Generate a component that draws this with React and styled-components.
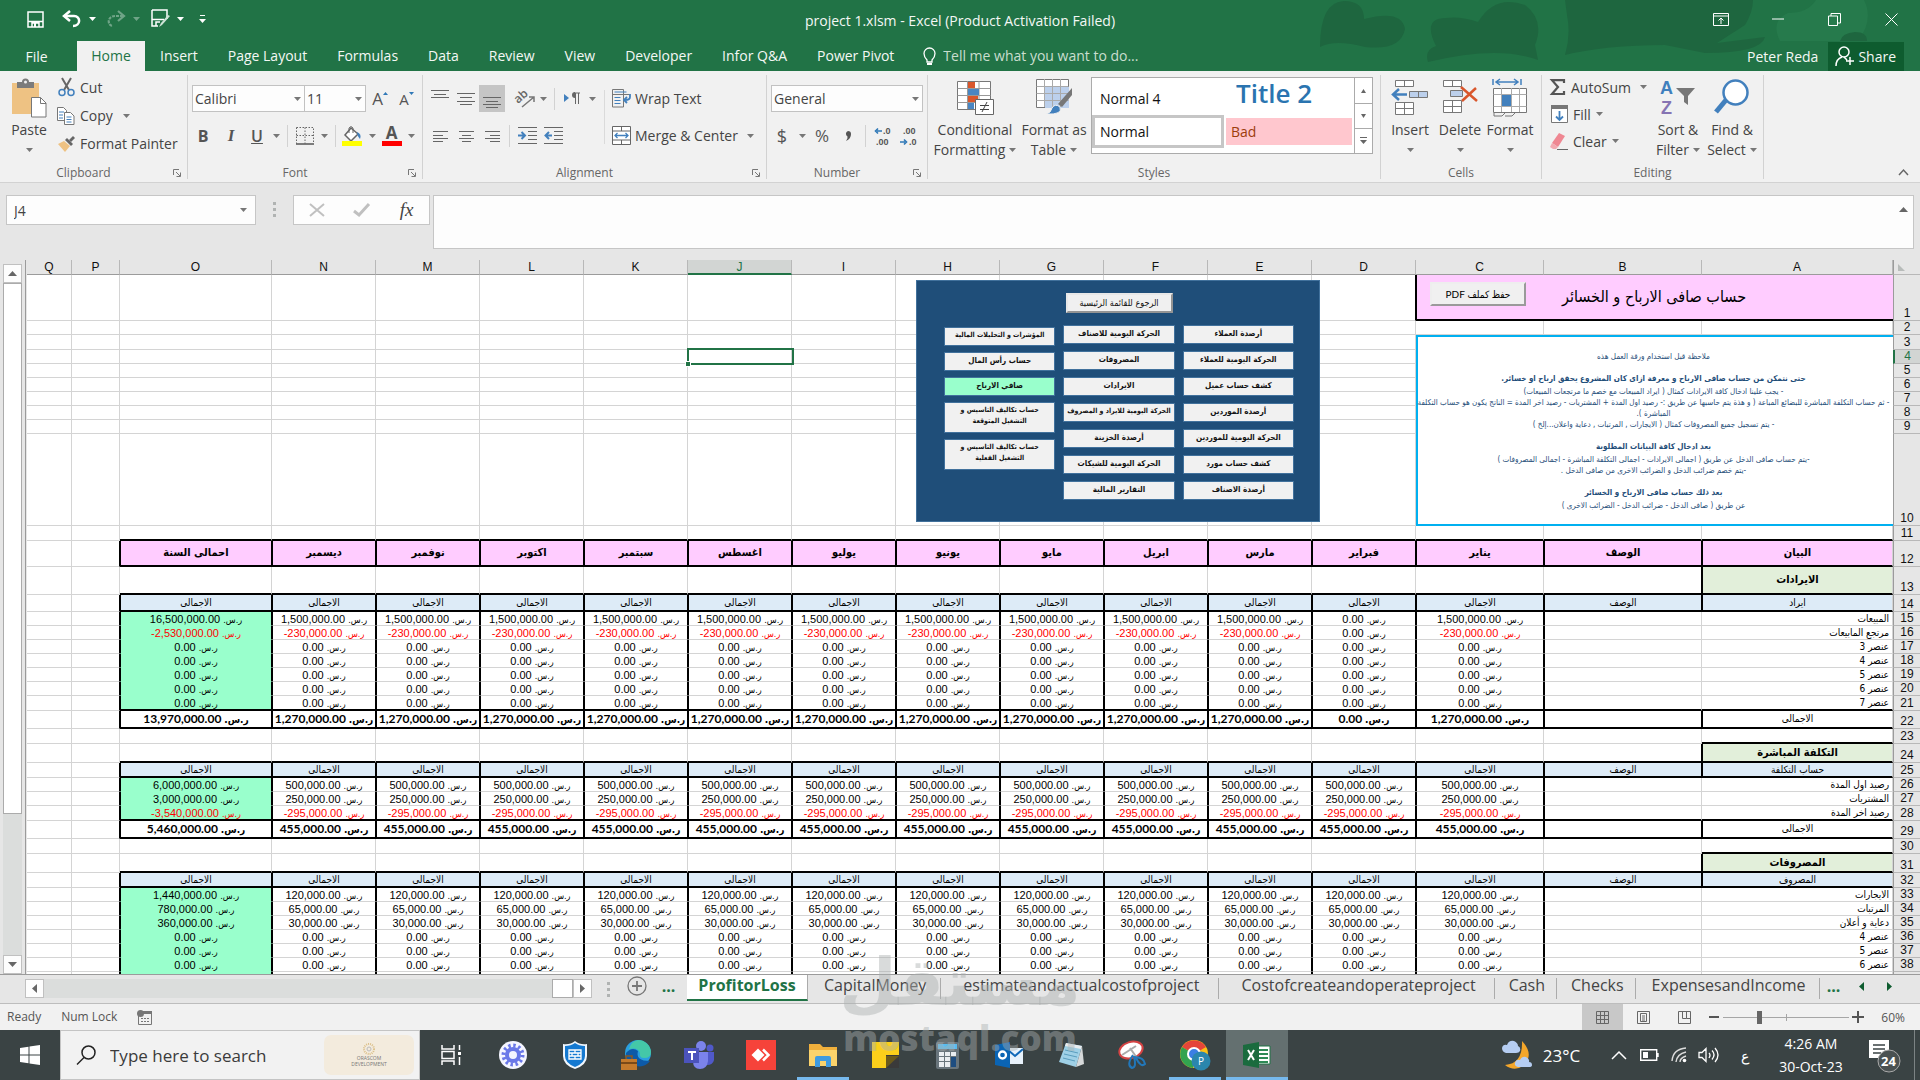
import React from "react";
import styled, { createGlobalStyle, css } from "styled-components";

const UI = '"Open Sans", "Noto Sans", sans-serif';
const CELL = '"Liberation Sans", "DejaVu Sans Condensed", "DejaVu Sans", sans-serif';
const ARABIC = '"DejaVu Sans Condensed", "DejaVu Sans", sans-serif';

const Global = createGlobalStyle`
  *, *::before, *::after { box-sizing: border-box; }
  body { margin: 0; background: #e6e6e6; font-family: ${UI}; }
  button, input, select, textarea { font: inherit; color: inherit; margin: 0; border-radius: 0; }
  button { background: none; border: 0; padding: 0; }
  svg { display: block; flex: none; overflow: visible; }
`;

const Shell = styled.div`
  position: relative;
  display: flex;
  flex-direction: column;
  height: 100vh;
  overflow: hidden;
  font-size: 14px;
  color: #444;
`;

/* ---------- Title bar and ribbon tabs ---------- */
const Header = styled.header`
  position: relative;
  flex: none;
  background: #217346;
  color: #f4f8f5;
`;
const Clouds = styled.svg`
  position: absolute;
  right: 0;
  top: 0;
`;
const TitleBar = styled.div`
  position: relative;
  height: 41px;
  display: grid;
  grid-template-columns: 1fr auto 1fr;
  align-items: center;
`;
const QuickAccess = styled.div`
  display: flex;
  align-items: center;
  padding: 0 0 3px 21px;
`;
const QuickButton = styled.button`
  width: 28px;
  height: 26px;
  display: flex;
  align-items: center;
  justify-content: center;
  opacity: ${(p) => (p.disabled ? 0.35 : 1)};
`;
const QuickSplit = styled.div`
  display: grid;
  grid-template-columns: 24px 16px;
  margin-left: ${(p) => p.$ml || 4}px;
  button { width: auto; }
`;
const WindowButtons = styled.div`
  display: flex;
  justify-content: flex-end;
  padding: 0 0 3px;
  button { width: 57px; height: 26px; display: flex; align-items: center; justify-content: center; }
`;
const TabRow = styled.nav`
  position: relative;
  display: flex;
  height: 30px;
  align-items: stretch;
`;
const Tab = styled.button`
  padding: 0 15px 1px;
  line-height: 28px;
  white-space: nowrap;
  ${(p) => p.$file && css`width: 77px; padding: 2px 4px 0 0;`}
  ${(p) => p.$active && css`background: #f1f1f1; color: #217346; width: 68px; padding: 0 0 1px;`}
`;
const TellMe = styled.label`
  display: flex;
  align-items: center;
  gap: 7px;
  padding-left: 14px;
  flex: 1;
  input { background: none; border: 0; padding: 0 0 2px; width: 240px; outline: 0; }
  input::placeholder { color: #c9decf; opacity: 1; }
`;
const Account = styled.div`
  display: flex;
  align-items: center;
  gap: 10px;
  padding-right: 16px;
`;
const Share = styled.button`
  display: flex;
  align-items: center;
  gap: 4px;
  height: 29px;
  padding: 0 8px 0 7px;
  background: #0e5c2f;
`;

/* ---------- Ribbon ---------- */
const Ribbon = styled.section`
  flex: none;
  display: flex;
  height: 112px;
  background: #f1f1f1;
  border-bottom: 1px solid #d2d2d2;
`;
const Group = styled.div`
  width: ${(p) => p.$w}px;
  display: flex;
  flex-direction: column;
  padding: 4px 0 3px;
`;
const GroupInner = styled.div`
  flex: 1;
  display: flex;
  flex-direction: column;
  border-right: 1px solid #d2d2d2;
`;
const GroupBody = styled.div`
  flex: 1;
  display: flex;
  padding-left: ${(p) => p.$pad || 0}px;
`;
const GroupFoot = styled.div`
  display: grid;
  grid-template-columns: 1fr ${(p) => (p.$launch ? "20px" : "0")};
  align-items: start;
  height: 16px;
  font-size: 12px;
  line-height: 20px;
  text-align: center;
  color: #666;
  button { height: 20px; display: flex; align-items: center; justify-content: center; }
`;
const Column = styled.div`
  display: flex;
  flex-direction: column;
  width: ${(p) => (p.$w ? p.$w + "px" : "auto")};
`;
const Stack = styled(Column)`
  > button { padding-bottom: 3px; }
`;
const SmallButton = styled.button`
  display: flex;
  align-items: center;
  gap: ${(p) => p.$gap || 5}px;
  height: ${(p) => p.$h || 28}px;
  white-space: nowrap;
`;
const IconSlot = styled.span`
  width: ${(p) => p.$w || 18}px;
  display: flex;
  justify-content: center;
`;
const BigButton = styled.button`
  width: ${(p) => p.$w}px;
  padding-top: 4px;
  display: flex;
  flex-direction: column;
  align-items: center;
  align-self: flex-start;
  line-height: 20px;
  white-space: nowrap;
`;
const BigIcon = styled.span`
  height: 41px;
  display: flex;
  align-items: flex-start;
`;
const WithCaret = styled.span`
  display: flex;
  align-items: center;
  justify-content: center;
  gap: 4px;
  height: 20px;
`;
const ToolRow = styled.div`
  display: flex;
  align-items: center;
  height: 27px;
  margin-top: 10px;
  padding-left: ${(p) => p.$pad || 0}px;
`;
const Tool = styled.button`
  flex: none;
  width: ${(p) => p.$w || 26}px;
  height: 27px;
  margin-left: ${(p) => p.$ml || 0}px;
  display: flex;
  align-items: center;
  justify-content: center;
  background: ${(p) => (p.$on ? "#c5c5c5" : "none")};
  font-size: ${(p) => p.$fs || 17}px;
  font-weight: ${(p) => p.$weight || 400};
  font-style: ${(p) => (p.$italic ? "italic" : "normal")};
  font-family: ${(p) => (p.$italic ? '"Liberation Serif", serif' : "inherit")};
  text-decoration: ${(p) => (p.$line ? "underline" : "none")};
  color: #555;
`;
const Sep = styled.span`
  width: 1px;
  height: 22px;
  margin: 0 ${(p) => p.$m || 4}px;
  background: #d2d2d2;
`;
const TallSep = styled.span`
  width: 1px;
  height: 54px;
  margin-top: 15px;
  background: #dadada;
`;
const SelectBox = styled.span`
  display: grid;
  grid-template-columns: 1fr 14px;
  align-items: center;
  width: ${(p) => p.$w}px;
  height: 27px;
  background: #fdfdfd;
  border: 1px solid #c2c2c2;
  border-left-width: ${(p) => (p.$joined ? 0 : 1)}px;
  select { appearance: none; border: 0; background: none; padding: 0 2px; min-width: 0; height: 25px; outline: 0; }
  svg { justify-self: center; }
`;
const Gallery = styled.div`
  display: grid;
  grid-template-columns: 1fr 18px;
  width: 282px;
  height: 77px;
  margin: 2px 0 0 2px;
  background: #fff;
  border: 1px solid #ababab;
`;
const StyleGrid = styled.div`
  display: grid;
  grid-template-columns: 132px 126px;
  grid-template-rows: 37px 33px;
  column-gap: 2px;
`;
const StyleCell = styled.button`
  color: #111;
  text-align: left;
  padding: 3px 0 0 8px;
  ${(p) => p.$picked && css`border: 3px solid #c6c6c6; padding: 0 0 0 5px;`}
  ${(p) => p.$title && css`color: #2a74b0; font-size: 26px; line-height: 30px; font-weight: 600; padding: 0 0 7px 10px;`}
  ${(p) => p.$bad && css`background: #ffc7ce; color: #9c3d0c; height: 27px; margin-top: 3px; padding: 0 0 0 5px;`}
`;
const GalleryScroll = styled.div`
  display: grid;
  grid-template-rows: 1fr 1fr 1fr;
  border-left: 1px solid #ababab;
  button { display: flex; align-items: center; justify-content: center; }
  button + button { border-top: 1px solid #ababab; }
`;
const RibbonEnd = styled.div`
  flex: 1;
  display: flex;
  align-items: flex-end;
  justify-content: flex-end;
  padding: 0 11px 6px 0;
`;

/* ---------- Formula bar ---------- */
const FormulaBar = styled.section`
  flex: none;
  display: flex;
  align-items: flex-start;
  height: 77px;
  padding: 12px 6px 0;
`;
const NameBox = styled.div`
  display: grid;
  grid-template-columns: 1fr 24px;
  align-items: center;
  width: 250px;
  height: 30px;
  background: #fdfdfd;
  border: 1px solid #c6c6c6;
  input { border: 0; background: none; outline: 0; padding: 0 7px; min-width: 0; }
  button { display: flex; justify-content: center; }
`;
const Dots = styled.span`
  display: flex;
  flex-direction: column;
  justify-content: center;
  align-items: center;
  gap: 3px;
  width: ${(p) => p.$w}px;
  height: 28px;
  i { width: 3px; height: 3px; background: #b0b3b2; }
`;
const FormulaTools = styled.div`
  display: flex;
  width: 137px;
  height: 30px;
  background: #fdfdfd;
  border: 1px solid #c6c6c6;
  button { flex: 1; display: flex; align-items: center; justify-content: center; font: italic 19px "Liberation Serif", serif; color: #444; }
`;
const FormulaInput = styled.div`
  flex: 1;
  display: flex;
  height: 54px;
  margin-left: 3px;
  background: #fdfdfd;
  border: 1px solid #c6c6c6;
  textarea { flex: 1; border: 0; background: none; outline: 0; resize: none; padding: 4px; }
  button { width: 20px; height: 27px; display: flex; align-items: center; justify-content: center; }
`;

/* ---------- Worksheet ---------- */
const Sheet = styled.main`
  position: relative;
  flex: 1;
  min-height: 0;
  display: flex;
  overflow: hidden;
  border-bottom: 1px solid #9b9b9b;
`;
const VScroll = styled.div`
  flex: none;
  width: 26px;
  display: flex;
  flex-direction: column;
  padding: 4px 3px 0;
  border-right: 1px solid #9b9b9b;
`;
const ScrollButton = styled.button`
  flex: none;
  width: 19px;
  height: 19px;
  display: flex;
  align-items: center;
  justify-content: center;
  background: #fdfdfd;
  border: 1px solid #c0c0c0;
`;
const VTrack = styled.div`
  flex: 1;
  width: 19px;
  background: #dbdddc;
  &::before { content: ""; display: block; height: 79%; background: #fff; border: 1px solid #ababab; }
`;
const Table = styled.table`
  flex: 1;
  width: 0;
  margin-left: 1px;
  table-layout: fixed;
  border-collapse: separate;
  border-spacing: 0;
  align-self: flex-start;
  font-family: ${CELL};
  font-size: 12px;
  line-height: 12px;
  color: #000;
`;
const ColHead = styled.th`
  height: 15px;
  padding: 0;
  font-weight: 400;
  background: ${(p) => (p.$on ? "#d2d5d3" : "#e6e6e6")};
  color: ${(p) => (p.$on ? "#217346" : "#111")};
  border-right: 1px solid #b8b8b8;
  border-bottom: ${(p) => (p.$on ? "2px solid #217346" : "1px solid #9b9b9b")};
`;
const Corner = styled.th`
  padding: 0 0 0 4px;
  background: #e6e6e6;
  border-left: 1px solid #9b9b9b;
  border-bottom: 1px solid #b8b8b8;
`;
const RowHead = styled.th`
  padding: 0 0 1px;
  font-weight: 400;
  text-align: center;
  vertical-align: bottom;
  background: ${(p) => (p.$on ? "#d2d5d3" : "#e6e6e6")};
  color: ${(p) => (p.$on ? "#217346" : "#111")};
  border-left: ${(p) => (p.$on ? "2px solid #217346" : "1px solid #9b9b9b")};
  border-bottom: 1px solid #b8b8b8;
`;
const kinds = {
  month: css`background: #ffccff; font: bold 11px/20px ${ARABIC};`,
  section: css`background: #e2efda; font: bold 11px/16px ${ARABIC};`,
  head: css`background: #ddebf7; font: 10px/12px ${ARABIC};`,
  label: css`text-align: right; padding-right: 3px; font: 10px/12px ${ARABIC};`,
  sum: css`font: 10px/14px ${ARABIC};`,
  year: css`background: #99ffcc; border-bottom-color: #99ffcc;`,
  total: css`font: bold 12px/14px Lato, "DejaVu Sans Condensed", sans-serif;`,
};
const Cell = styled.td`
  padding: 0;
  text-align: center;
  white-space: nowrap;
  overflow: hidden;
  background: #fff;
  font-size: 11px;
  border-right: 1px solid ${(p) => (p.$right ? "#000" : "#d4d4d4")};
  border-left: ${(p) => (p.$left ? "1px solid #000" : "0")};
  border-bottom: 1px solid #d4d4d4;
  ${(p) => kinds[p.$kind]}
  ${(p) => p.$bottom && css`border-bottom: 2px solid #000;`}
  ${(p) => p.$red && css`color: #f00;`}
`;
const SelectedCell = styled(Cell)`
  position: relative;
  overflow: visible;
  &::before { content: ""; position: absolute; inset: -2px; border: 2px solid #217346; }
  &::after { content: ""; position: absolute; left: -4px; bottom: -4px; width: 6px; height: 6px; background: #217346; border: 1px solid #fff; }
`;
const TitleCell = styled.td`
  background: #ffccff;
  border-left: 1px solid #000;
  border-bottom: 2px solid #000;
  padding: 0;
  text-align: center;
  font: 16px/24px ${ARABIC};
`;
const Currency = styled.span`
  font-family: ${ARABIC};
  font-size: ${(p) => (p.$bold ? 10 : 9)}px;
  line-height: 10px;
`;
const NoteCell = styled.td`
  padding: 0;
  background: #fff;
  border: 2px solid #00b0f0;
  border-right: 0;
  text-align: center;
  vertical-align: middle;
  color: #1f4e79;
  font: 8px/11px ${ARABIC};
  white-space: nowrap;
  p { margin: 0 0 10px; }
  p:last-child { margin: 0; }
  b { display: block; line-height: 14px; }
`;
const PdfButton = styled.button`
  position: absolute;
  top: 22px;
  right: 394px;
  width: 96px;
  height: 24px;
  background: #f0f0f0;
  border: 2px outset #eee;
  font: 10px/18px Lato, "DejaVu Sans Condensed", sans-serif;
  color: #000;
`;
const Panel = styled.aside`
  position: absolute;
  top: 20px;
  right: 600px;
  width: 404px;
  height: 242px;
  padding: 12px 25px 0 27px;
  background: #1f4e79;
  border: 1px solid #41719c;
  display: flex;
  flex-direction: column;
  align-items: center;
  font: bold 8px/13px ${ARABIC};
  color: #111;
`;
const HomeButton = styled.button`
  width: 107px;
  height: 20px;
  margin-bottom: 12px;
  background: #f0f0f0;
  border: 2px outset #e8e8e8;
  font-weight: 400;
  font-size: 9px;
`;
const PanelCols = styled.div`
  display: grid;
  grid-template-columns: repeat(3, minmax(0, 1fr));
  gap: 8px;
  width: 100%;
`;
const PanelCol = styled.div`
  display: flex;
  flex-direction: column;
  gap: ${(p) => p.$gap || 7}px;
  padding-top: ${(p) => p.$top || 0}px;
`;
const PanelButton = styled.button`
  height: ${(p) => (p.$tall ? 31 : 19)}px;
  padding-bottom: 3px;
  background: ${(p) => (p.$on ? "#99ffcc" : "#f1f1f1")};
  border: 1px solid #41719c;
  white-space: nowrap;
  font-size: ${(p) => (p.$small ? 7 : 8)}px;
  line-height: ${(p) => (p.$tall ? 11 : 13)}px;
`;

/* ---------- Sheet tabs and status bar ---------- */
const SheetBar = styled.nav`
  flex: none;
  display: flex;
  height: 29px;
  padding-left: 25px;
  border-bottom: 1px solid #bdbdbd;
  font-size: 16px;
`;
const HScroll = styled.div`
  display: flex;
  width: 567px;
  height: 19px;
  margin-top: 4px;
  background: #dbdddc;
`;
const HThumb = styled.span`
  width: 21px;
  margin-left: auto;
  background: #fff;
  border: 1px solid #ababab;
`;
const SheetTab = styled.button`
  padding: 0 ${(p) => p.$r}px 6px ${(p) => p.$l}px;
  height: 26px;
  line-height: 20px;
  white-space: nowrap;
  ${(p) => p.$active && css`
    width: 121px;
    padding: 0 0 4px;
    background: #fff;
    color: #217346;
    font-weight: 700;
    border-right: 1px solid #ababab;
    border-bottom: 2px solid #217346;
  `}
`;
const TabSep = styled.span`
  width: 1px;
  height: 21px;
  margin-top: 3px;
  background: #ababab;
`;
const More = styled.button`
  width: ${(p) => p.$w}px;
  height: 22px;
  color: #217346;
  font-weight: 700;
  line-height: 20px;
  display: flex;
  align-items: center;
  justify-content: center;
`;
const StatusBar = styled.footer`
  flex: none;
  display: flex;
  align-items: center;
  height: 26px;
  padding: 0 15px 0 7px;
  background: #f1f1f1;
  font-size: 12px;
  color: #555;
`;
const StatusText = styled.span`
  margin-right: 20px;
  padding-bottom: 1px;
`;
const Spacer = styled.span`
  flex: 1;
`;
const ViewButton = styled.button`
  width: 41px;
  height: 26px;
  display: flex;
  align-items: center;
  justify-content: center;
  background: ${(p) => (p.$on ? "#c8c8c8" : "none")};
`;
const ZoomButton = styled.button`
  width: 18px;
  height: 20px;
  display: flex;
  align-items: center;
  justify-content: center;
`;
const Slider = styled.input`
  appearance: none;
  width: 126px;
  height: 14px;
  background: linear-gradient(#a6a6a6, #a6a6a6) center / 100% 1px no-repeat, linear-gradient(#a6a6a6, #a6a6a6) center / 1px 7px no-repeat;
  &::-webkit-slider-thumb { appearance: none; width: 5px; height: 13px; background: #666; }
`;
const Percent = styled.output`
  width: 38px;
  text-align: right;
`;

/* ---------- Taskbar ---------- */
const Taskbar = styled.footer`
  flex: none;
  display: flex;
  align-items: stretch;
  height: 50px;
  background: #3a4344;
  color: #fff;
`;
const Start = styled.button`
  width: 60px;
  display: flex;
  align-items: center;
  justify-content: center;
`;
const Search = styled.label`
  width: 360px;
  display: flex;
  align-items: center;
  padding: 0 5px 0 15px;
  gap: 14px;
  background: #f2f2f2;
  border: 1px solid #c4c4c4;
  font-size: 17px;
  input { flex: 1; min-width: 0; border: 0; background: none; outline: 0; padding: 0; }
  input::placeholder { color: #3b3b3b; opacity: 1; }
`;
const Promo = styled.span`
  width: 90px;
  height: 40px;
  display: flex;
  flex-direction: column;
  align-items: center;
  justify-content: center;
  border-radius: 7px;
  background: #f3ebdd;
  font-size: 5px;
  line-height: 6px;
  text-align: center;
  color: #777;
`;
const AppButton = styled.button`
  width: 62px;
  display: flex;
  align-items: center;
  justify-content: center;
  background: ${(p) => (p.$on ? "#647070" : "none")};
  background-image: ${(p) => (p.$open ? "linear-gradient(#76b9ed, #76b9ed)" : "none")};
  background-size: ${(p) => (p.$on ? "100%" : "52px")} 3px;
  background-position: bottom center;
  background-repeat: no-repeat;
`;
const Tray = styled.div`
  margin-left: auto;
  display: flex;
  align-items: center;
`;
const TrayItem = styled.button`
  width: ${(p) => p.$w || 30}px;
  height: 50px;
  display: flex;
  align-items: center;
  justify-content: center;
  gap: 10px;
  font-size: ${(p) => p.$fs || 14}px;
  line-height: 23px;
  white-space: nowrap;
`;
const Show = styled.button`
  width: 6px;
  height: 50px;
  border-left: 1px solid #7c8384;
`;
const Watermark = styled.div`
  position: absolute;
  left: 50%;
  bottom: 22px;
  width: 230px;
  margin-left: -115px;
  display: flex;
  flex-direction: column;
  align-items: center;
  color: rgba(170, 176, 176, 0.45);
  font: 900 35px/40px "Open Sans", sans-serif;
  pointer-events: none;
`;
const WatermarkArabic = styled.div`
  font: bold 66px/70px "DejaVu Sans", sans-serif;
`;

/* ---------- Icons ---------- */
const Svg = ({ w, h, children, ...r }) => (
  <svg width={w} height={h} viewBox={`0 0 ${w} ${h}`} fill="none" aria-hidden="true" {...r}>{children}</svg>
);
const Caret = ({ c = "#777" }) => <Svg w={7} h={4}><path d="M0 0h7L3.500 4z" fill={c} /></Svg>;
const Up = () => <Svg w={9} h={5}><path d="M0 5h9L4.500 0z" fill="#666" /></Svg>;
const Down = () => <Svg w={9} h={5}><path d="M0 0h9L4.500 5z" fill="#666" /></Svg>;
const Left = ({ c = "#666" }) => <Svg w={5} h={9}><path d="M5 0v9L0 4.500z" fill={c} /></Svg>;
const Right = ({ c = "#666" }) => <Svg w={5} h={9}><path d="M0 0v9l5-4.500z" fill={c} /></Svg>;
const Lines = ({ rows, w = 18, h = 18 }) => (
  <Svg w={w} h={h}>{rows.map(([x1, x2, y]) => <path key={y} d={`M${x1} ${y}.5H${x2}`} stroke="#666" />)}</Svg>
);
const Launcher = () => <Svg w={8} h={8}><path d="M.5 6V.5H6M3 3l4 4M7.500 3.500v4h-4" stroke="#777" /></Svg>;
const SaveIcon = () => <Svg w={17} h={17}><path d="M1 1h15v15H1zM1 10.500h15M5 16v-4h7v4" stroke="#fff" strokeWidth="1.500" /><path d="M7 12h2v4H7z" fill="#fff" /></Svg>;
const SaveEditIcon = () => <Svg w={19} h={20}><path d="M1 1h15v9M1 1v16h6M1 10.500h12M5 17v-4h4" stroke="#fff" strokeWidth="1.500" /><path d="M8 18l2-4 7-8 2 1-8 9z" fill="#cfe3d7" /></Svg>;
const UndoIcon = () => <Svg w={18} h={17}><path d="M2 5h9c7 0 7 10-1 10" stroke="#fff" strokeWidth="2.500" /><path d="M7 0L1 5l6 5" stroke="#fff" strokeWidth="2.500" /></Svg>;
const RedoIcon = () => <Svg w={18} h={17}><path d="M16 5H8C0 5 0 15 6 15" stroke="#fff" strokeWidth="2.200" strokeDasharray="3 1" /><path d="M11 0l6 5-6 5" stroke="#fff" strokeWidth="2.200" /></Svg>;
const PasteIcon = () => (
  <Svg w={35} h={39}><path d="M0 4h27v31H0z" fill="#eec283" /><path d="M5 3h5a3.500 3.500 0 0 1 7 0h5v6H5z" fill="#7b7b7b" /><circle cx="13.500" cy="3" r="1.500" fill="#f1f1f1" /><path d="M19.500 18.500h9l5.500 5.500v14H19.500z" fill="#fff" stroke="#777" /><path d="M28.500 18.500v6H34" stroke="#777" /></Svg>
);
const CutIcon = () => <Svg w={17} h={19}><path d="M4 0l7 12M13 0L6 12" stroke="#666" strokeWidth="2" /><circle cx="4" cy="14.500" r="3" stroke="#4280bd" strokeWidth="1.500" /><circle cx="13" cy="14.500" r="3" stroke="#4280bd" strokeWidth="1.500" /></Svg>;
const CopyIcon = () => <Svg w={18} h={18}><path d="M.5.5h6l3 3v10h-9z" fill="#fff" stroke="#777" /><path d="M2 5h5M2 8h4M2 11h4" stroke="#4280bd" /><path d="M7.500 5.500h6l3.500 3.500v8.500H7.500z" fill="#fff" stroke="#777" /><path d="M9.500 10h5M9.500 12.500h5M9.500 15h5" stroke="#4280bd" /></Svg>;
const BrushIcon = () => <Svg w={18} h={16}><path d="M1 8l6-3 6 5-5 6z" fill="#eec283" /><path d="M8 4l2-2 6 6-2 2z" fill="#666" /><path d="M12 4l4-4 2 2-4 4z" fill="#666" /></Svg>;
const BorderIcon = () => <Svg w={18} h={18}><path d="M.5.5h17v16M.5.5v16M9 .5v16M.5 8.500h17" stroke="#666" strokeDasharray="1.500 1.500" /><path d="M0 17h18" stroke="#555" strokeWidth="1.500" /></Svg>;
const BucketIcon = () => <Svg w={21} h={20}><path d="M9 2l7 6-7 7-6-6z" fill="#fff" stroke="#666" strokeWidth="1.500" /><path d="M7 7V2q2-3 4 0v5" stroke="#666" /><path d="M15 6q5 2 3 7q-3-3-3-7" fill="#4280bd" /><path d="M0 15h20v5H0z" fill="#ff0" /></Svg>;
const FontColor = styled.span`
  display: block;
  width: 20px;
  border-bottom: 5px solid #f00;
  font: 700 17px/16px "Open Sans", sans-serif;
  text-align: center;
`;
const OrientIcon = () => <Svg w={20} h={18}><text x="0" y="11" fontSize="12" fontWeight="600" fill="#666" transform="rotate(-42 5 10)" fontFamily="Open Sans">ab</text><path d="M6 17L18 7M13 7h5v5" stroke="#777" strokeWidth="1.500" /></Svg>;
const ParaIcon = () => <Svg w={17} h={13}><path d="M0 2l5 4-5 4z" fill="#4280bd" /><path d="M10 1h6M11.500 1v11M14.500 1v11" stroke="#666" /><path d="M11 0a3 3 0 0 0 0 6z" fill="#666" /></Svg>;
const IndentIcon = ({ out }) => <Svg w={19} h={17}><path d="M0 .5h19M10 4.500h9M10 8.500h9M10 12.500h9M0 16.500h19" stroke="#666" /><path d={out ? "M8 8.500H2M5 5L1.500 8.500 5 12" : "M0 8.500h6M3.500 5L7 8.500 3.500 12"} stroke="#4280bd" strokeWidth="2" /></Svg>;
const WrapIcon = () => <Svg w={20} h={19}><path d="M.5.5h11v17.500h-11zM.5 5.500h17" stroke="#777" /><path d="M2.500 3h12M2.500 8.500h6M2.500 11.500h6M2.500 14.500h6" stroke="#4280bd" /><path d="M18 5v3q0 3-5 3M15 8l-3 3 3 3" stroke="#4280bd" strokeWidth="1.800" /></Svg>;
const MergeIcon = () => <Svg w={20} h={19}><path d="M.5.5h18v18H.5zM.5 5h18M.5 14h18M9.500.5V5M9.500 14v4.500" stroke="#666" fill="#fff" /><path d="M3 9.500h13M5.500 7L3 9.500 5.500 12M13.500 7L16 9.500 13.500 12" stroke="#4280bd" strokeWidth="1.300" /></Svg>;
const DecimalIcon = ({ dec }) => (
  <Svg w={18} h={20} fontFamily="Liberation Sans" fontSize="9" fontWeight="600"><text x={dec ? 3 : 9} y="8" fill="#555">{dec ? ".00" : ".0"}</text><text x={dec ? 9 : 2} y="19" fill="#555">{dec ? ".0" : ".00"}</text><path d={dec ? "M0 16h5M4 13.500L6.500 16 4 18.500" : "M3 5h5M4 2.500L1.500 5 4 7.500"} stroke="#2f78b7" strokeWidth="1.600" /></Svg>
);
const CondIcon = () => (
  <Svg w={37} h={36}><path d="M.5 2.500h33v28H.5z" fill="#fff" stroke="#777" /><path d="M.5 9.500h33M.5 16.500h33M.5 23.500h33M10.500 2v28M22 2v28" stroke="#999" /><path d="M11 3h7v6h-7z M11 17h10v6H11z" fill="#d9562b" /><path d="M11 10h11v6H11zM11 24h6v6h-6z" fill="#4a86c2" /><path d="M18.500 20.500h18v15h-18z" fill="#fff" stroke="#666" /><path d="M23 26.500h9M23 30.500h9M30 23l-5 10" stroke="#444" /></Svg>
);
const FmtTableIcon = () => (
  <Svg w={37} h={36}><path d="M.5.5h32v28H.5z" fill="#fff" stroke="#777" /><path d="M9 8h24v21H9z" fill="#bcd0ec" /><path d="M.5 7.500h32M.5 14.500h32M.5 21.500h32M8.500 0v28M16.500 0v28M24.500 0v28" stroke="#aaa" /><path d="M36 9v7L26 28l-4-3z" fill="#777" /><path d="M10 35q5-1 6-6 3-5 8-1 3 8-14 7" fill="#4280bd" stroke="#f1f1f1" /></Svg>
);
const InsertIcon = () => (
  <Svg w={36} h={36}><path d="M3.500 1.500h18v6h-18zM12.500 1.500v6M3.500 23.500h18v12h-18zM3.500 29.500h18M12.500 23.500v12" fill="#fff" stroke="#777" /><path d="M17.500 12.500h18v6h-18zM26.500 12.500v6" fill="#bcd0ec" stroke="#777" /><path d="M1 15.500h14M7 10l-6 5.500L7 21" stroke="#4280bd" strokeWidth="2.500" /></Svg>
);
const DeleteIcon = () => (
  <Svg w={36} h={36}><path d="M1.500 1.500h18v6h-18zM10.500 1.500v6M1.500 21.500h18v12h-18zM1.500 27.500h18M10.500 21.500v12" fill="#fff" stroke="#777" /><path d="M8.500 11.500h12v6h-12z" fill="#bcd0ec" stroke="#777" /><path d="M19 8l16 14M34 9L20 22" stroke="#d9562b" strokeWidth="2.500" /></Svg>
);
const FormatIcon = () => (
  <Svg w={36} h={38}><path d="M1 0v6M29 0v6M4 3h22M8 0L4 3l4 3M22 0l4 3-4 3" stroke="#4280bd" strokeWidth="1.500" /><path d="M1.500 9.500h33v24h-33z" fill="#fff" stroke="#777" /><path d="M1.500 15.500h33M1.500 27.500h33M9.500 9v24M19.500 9v24M27.500 9v24" stroke="#aaa" /><path d="M10 16h9v11h-9z" fill="#4280bd" /><path d="M2 34v3h8l3-3M13 37h7l3-3" stroke="#777" /></Svg>
);
const SigmaIcon = () => <Svg w={16} h={17}><path d="M14 4V1.200H2L8 8l-6 7h12v-3" stroke="#555" strokeWidth="2.200" /></Svg>;
const FillIcon = () => <Svg w={17} h={18}><path d="M.5.5h16v17H.5z" fill="#fff" stroke="#777" /><path d="M0 0h17v4H0z" fill="#777" /><path d="M8.500 6v9M5 11.500L8.500 15l3.500-3.500" stroke="#4280bd" strokeWidth="1.800" /></Svg>;
const ClearIcon = () => <Svg w={18} h={17}><path d="M9 0l6 3-7 11-6-4z" fill="#ef8792" /><path d="M2 10l6 4-2 2H3l-3-2z" fill="#f2a9b0" /><path d="M7 16.500h11" stroke="#666" /></Svg>;
const SortIcon = () => (
  <Svg w={36} h={36} fontFamily="Liberation Sans" fontWeight="600" fontSize="18"><text x="0" y="15" fill="#3f7fbd">A</text><text x="1" y="35" fill="#8674b3">Z</text><path d="M16 9h19l-7 8v9l-4-3v-6z" fill="#777" /></Svg>
);
const FindIcon = () => <Svg w={36} h={36}><path d="M12 21L2 33" stroke="#4280bd" strokeWidth="5" /><circle cx="21.500" cy="13.500" r="12" fill="#fff" stroke="#4280bd" strokeWidth="2.500" /></Svg>;
const Chevron = ({ c = "#666", w = 11 }) => <Svg w={w} h={w > 12 ? 9 : 7}><path d={w > 12 ? "M1 8l7-7 7 7" : "M1 6l4.500-5L10 6"} stroke={c} strokeWidth="1.500" /></Svg>;

/* ---------- Sheet data ---------- */
const letters = ["Q", "P", "O", "N", "M", "L", "K", "J", "I", "H", "G", "F", "E", "D", "C", "B", "A"];
const widths = [45, 48, 152, 104, 104, 104, 104, 104, 104, 104, 104, 104, 104, 104, 128, 158, 191, 27];
const months = ["احمالى السنة", "ديسمبر", "نوفمبر", "اكتوبر", "سبتمبر", "اغسطس", "يوليو", "يونيو", "مايو", "ابريل", "مارس", "فبراير", "يناير"];
const O = 2, D = 13, C = 14, B = 15, A = 16;

const rows = [
  { n: 1, h: 46, title: true }, { n: 2, h: 14 }, { n: 3, h: 15, note: true }, { n: 4, h: 14 }, { n: 5, h: 14 }, { n: 6, h: 14 },
  { n: 7, h: 14 }, { n: 8, h: 14 }, { n: 9, h: 14 }, { n: 10, h: 92 }, { n: 11, h: 15, bottom: O },
  { n: 12, h: 26, kind: "month", a: "البيان", bottom: O },
  { n: 13, h: 28, kind: "section", a: "الايرادات", bottom: O },
  { n: 14, h: 17, kind: "head", a: "ايراد", bottom: O },
  { n: 15, h: 14, kind: "data", a: "المبيعات", year: "16,500,000.00", v: "1,500,000.00", feb: "0.00" },
  { n: 16, h: 14, kind: "data", a: "مرتجع المابيعات", year: "-2,530,000.00", v: "-230,000.00", feb: "0.00" },
  ...[3, 4, 5, 6, 7].map((k) => ({ n: 14 + k, h: k === 7 ? 15 : 14, kind: "data", a: `عنصر ${k}`, year: "0.00", v: "0.00", bottom: k === 7 ? O : undefined })),
  { n: 22, h: 18, kind: "total", a: "الاجمالى", year: "13,970,000.00", v: "1,270,000.00", feb: "0.00", bottom: O },
  { n: 23, h: 15, bottom: A },
  { n: 24, h: 19, kind: "section", a: "التكلفة المباشرة", bottom: O },
  { n: 25, h: 15, kind: "head", a: "حساب التكلفة", bottom: O },
  { n: 26, h: 14, kind: "data", a: "رصيد اول المدة", year: "6,000,000.00", v: "500,000.00" },
  { n: 27, h: 14, kind: "data", a: "المشتريات", year: "3,000,000.00", v: "250,000.00" },
  { n: 28, h: 15, kind: "data", a: "رصيد اخر المدة", year: "-3,540,000.00", v: "-295,000.00", bottom: O },
  { n: 29, h: 18, kind: "total", a: "الاجمالى", year: "5,460,000.00", v: "455,000.00", bottom: O },
  { n: 30, h: 15, bottom: A },
  { n: 31, h: 19, kind: "section", a: "المصروفات", bottom: O },
  { n: 32, h: 15, kind: "head", a: "المصروف", bottom: O },
  { n: 33, h: 14, kind: "data", a: "الايجارات", year: "1,440,000.00", v: "120,000.00" },
  { n: 34, h: 14, kind: "data", a: "المرتبات", year: "780,000.00", v: "65,000.00" },
  { n: 35, h: 14, kind: "data", a: "دعاية و أعلان", year: "360,000.00", v: "30,000.00" },
  ...[4, 5, 6].map((k) => ({ n: 32 + k, h: 14, kind: "data", a: `عنصر ${k}`, year: "0.00", v: "0.00" })),
  { n: "", h: 14, kind: "data", a: "", year: "", v: "" },
];

const hasLeftRule = (row, c) => {
  if (row.title || (row.n >= 3 && row.n <= 10)) return false;
  if (row.kind === "section") return c === A;
  if (row.kind === "data") return c >= O && c <= B;
  if (row.kind) return c >= O && c <= A;
  return false;
};

const Money = ({ value, bold }) => (value ? <><Currency $bold={bold}>ر.س.</Currency>{"\u00a0\u200e" + value}</> : null);

const cellContent = (row, c) => {
  if (!row.kind || c < O) return [null, undefined];
  if (row.kind === "month") return [c === A ? row.a : c === B ? "الوصف" : months[c - O], "month"];
  if (row.kind === "section") return c === A ? [row.a, "section"] : [null, undefined];
  if (row.kind === "head") return [c === A ? row.a : c === B ? "الوصف" : "الاجمالى", "head"];
  const total = row.kind === "total";
  if (c === A) return [row.a, total ? "sum" : "label"];
  if (c === B) return [null, undefined];
  const value = c === O ? row.year : c === D && row.feb ? row.feb : row.v;
  return [<Money value={value} bold={total} />, total ? "total" : c === O ? "year" : undefined, value.startsWith("-")];
};

const Note = () => (
  <NoteCell colSpan={3} rowSpan={8} dir="rtl">
    <p>ملاحظة قبل استخدام ورقة العمل هذه</p>
    <p>
      <b>حتى نتمكن من حساب صافى الارباح و معرفة ازاى كان المشروع يحقق ارباح او خسائر.</b>
      - يجب علينا ادخال كافة الايرادات كمثال ( ايراد المبيعات مع خصم ما مرتجعات المبيعات)<br />
      - ثم حساب التكلفة المباشرة للبضائع المباعة ( و هذة يتم حاسبها عن طريق :- رصيد اول المدة + المشتريات - رصيد اخر المدة = الناتج يكون هو حساب التكلفة<br />
      المباشرة ).<br />
      - يتم تسجيل جميع المصروفات كمثال ( الايجارات , المرتبات , دعاية واعلان...إلخ )
    </p>
    <p>
      <b>بعد ادخال كافة البيانات المطلوبة</b>
      -يتم حساب صافى الدخل عن طريق ( اجمالى الايرادات - اجمالى التكلفة المباشرة - اجمالى المصروفات )<br />
      -يتم خصم ضرائب الدخل و الضرائب الاخرى من صافى الدخل .
    </p>
    <p>
      <b>بعد ذلك حساب صافى الارباح و الخسائر</b>
      عن طريق ( صافى الدخل - ضرائب الدخل - الضرائب الاخرى )
    </p>
  </NoteCell>
);

const SheetRow = ({ row }) => {
  const last = row.title || (row.n >= 3 && row.n <= 10) ? C : A + 1;
  return (
    <tr style={{ height: row.h }}>
      {letters.slice(0, last).map((l, c) => {
        const [content, kind, red] = cellContent(row, c);
        const El = row.n === 4 && l === "J" ? SelectedCell : Cell;
        return (
          <El key={l} dir="rtl" $kind={kind} $red={red} $left={hasLeftRule(row, c)} $right={(row.title && c === D) || (c < A && hasLeftRule(row, c + 1))} $bottom={row.bottom !== undefined && c >= row.bottom}>
            {content}
          </El>
        );
      })}
      {row.title && <TitleCell colSpan={3} dir="rtl">حساب صافى الارباح و الخسائر</TitleCell>}
      {row.note && <Note />}
      <RowHead scope="row" $on={row.n === 4}>{row.n}</RowHead>
    </tr>
  );
};

const panelLeft = [["المؤشرات و التحليلات المالية"], ["حساب رأس المال"], ["صافي الارباح"], ["حساب تكاليف التاسيس و", "التشغيل  المتوقعة"], ["حساب تكاليف التاسيس و", "التشغيل  الفعلية"]];
const panelMid = ["الحركة اليومية للاصناف", "المصروفات", "الايرادات", "الحركة اليومية للايراد و المصروف", "أرصدة الخزينة", "الحركة اليومية للشيكات", "التقارير المالية"];
const panelRight = ["أرصدة العملاء", "الحركة اليومية للعملاء", "كشف حساب عميل", "أرصدة الموردين", "الحركة اليومية للموردين", "كشف حساب مورد", "أرصدة الاصناف"];

const GroupBox = ({ w, label, launch, pad, children }) => (
  <Group $w={w}>
    <GroupInner>
      <GroupBody $pad={pad}>{children}</GroupBody>
      <GroupFoot $launch={launch}><span>{label}</span>{launch && <button aria-label={`${label} settings`}><Launcher /></button>}</GroupFoot>
    </GroupInner>
  </Group>
);

const Dropdown = ({ w, value, label, joined }) => (
  <SelectBox $w={w} $joined={joined}><select aria-label={label} defaultValue={value}><option>{value}</option></select><Caret /></SelectBox>
);

const CaretTool = ({ w = 14, label }) => <Tool $w={w} aria-label={label}><Caret /></Tool>;

const Big = ({ w, icon, l1, l2 }) => (
  <BigButton $w={w}><BigIcon>{icon}</BigIcon><span>{l1}</span><WithCaret>{l2}<Caret /></WithCaret></BigButton>
);

/* ---------- Taskbar icons ---------- */
const apps = [
  { name: "Task View", icon: <Svg w={21} h={20}><path d="M1 0v4h12V0M1 20v-4h12v4M1 6.500h12v7H1zM18.500 0v5M18.500 12v8" stroke="#fff" strokeWidth="1.500" /><path d="M17 7h3v3h-3z" fill="#fff" /></Svg> },
  { name: "Loop", icon: <Svg w={28} h={28}><circle cx="14" cy="14" r="14" fill="#f4f5ff" /><circle cx="14" cy="14" r="6" stroke="#6a78e8" strokeWidth="4" /><circle cx="14" cy="14" r="9.500" stroke="#6a78e8" strokeWidth="4" strokeDasharray="2.400 2.570" /></Svg> },
  { name: "Firewall", icon: <Svg w={26} h={28}><path d="M1 3q7 1 12-3 5 4 12 3v12q0 9-12 13Q1 24 1 15z" fill="#f0f6fc" /><path d="M3 5q6 0 10-3 4 3 10 3v10q0 7-10 11Q3 22 3 15z" fill="#1479d1" /><path d="M7 9h12v9H7zM7 12h12M7 15h12M13 9v3M10 12v3M16 12v3M13 15v3" stroke="#fff" strokeWidth="1.300" /></Svg> },
  { name: "Edge", icon: <Svg w={32} h={32}><circle cx="17" cy="14" r="13" fill="#2a9fe0" /><path d="M17 1a13 13 0 0 1 13 12q0 6-7 6-5 0-4-5Q17 8 8 10 10 2 17 1" fill="#44c8a8" /><path d="M5 14q6-7 12-2-3 10 12 10-5 7-14 5Q4 24 5 14" fill="#0d5aa8" /><path d="M0 20h16v11H0z" fill="#c47a2c" /><path d="M0 24h16" stroke="#7b4a18" strokeWidth="2" /><path d="M5 20v-3h6v3" stroke="#8b5a22" strokeWidth="1.500" /></Svg> },
  { name: "Teams", icon: <Svg w={30} h={28}><circle cx="17" cy="5" r="5" fill="#7b83eb" /><circle cx="26" cy="7" r="3.500" fill="#5059c9" /><path d="M21 11h9v8q-1 5-7 5z" fill="#5059c9" /><path d="M10 11h14v9q-1 8-8 8t-7-8z" fill="#7b83eb" /><path d="M0 7h15v15H0z" fill="#4b53bc" /><path d="M4 11h8M8 11v8" stroke="#fff" strokeWidth="2" /></Svg> },
  { name: "AnyDesk", icon: <Svg w={30} h={30}><path d="M0 0h30v30H0z" fill="#f6433a" /><path d="M12 8.500l6.500 6.500-6.500 6.500L5.500 15z" fill="#fff" /><path d="M17 9.500l5.500 5.500-5.500 5.500" stroke="#fff" strokeWidth="2.500" /></Svg> },
  { name: "File Explorer", open: true, icon: <Svg w={28} h={24}><path d="M0 1h11l3 3h14v19H0z" fill="#f0b03c" /><path d="M0 7h28v16H0z" fill="#fbd36b" /><path d="M6 24v-9q0-2 2-2h12q2 0 2 2v9h-5v-6h-6v6z" fill="#3f9be0" /></Svg> },
  { name: "Sticky Notes", icon: <Svg w={27} h={26}><path d="M0 0h27v13L14 26H0z" fill="#fbcf1b" /><path d="M27 13v13H14V13z" fill="#3a3a3a" /><path d="M14 26V14h13z" fill="#6b5a1b" /></Svg> },
  { name: "Calculator", icon: <Svg w={23} h={27}><rect width="23" height="27" rx="2" fill="#69757c" /><path d="M2 2h19v5H2z" fill="#58bdf0" /><path d="M3 10h5v4H3zM9 10h5v4H9zM15 10h5v4h-5zM3 15h5v4H3zM9 15h5v4H9zM3 20h5v5H3zM9 20h5v5H9z" fill="#e9edf0" /><path d="M15 15h5v10h-5z" fill="#1e4d80" /></Svg> },
  { name: "Outlook", icon: <Svg w={28} h={26}><path d="M12 6h16v16H12z" fill="#e8f2fb" /><path d="M13 8l7 6 8-7" stroke="#1269b8" strokeWidth="2" /><path d="M0 3l15-3v26L0 23z" fill="#0a64b4" /><circle cx="7.500" cy="13" r="3.500" stroke="#fff" strokeWidth="2.300" /></Svg> },
  { name: "Notepad", icon: <Svg w={26} h={26}><path d="M8 1l16 3-6 21L1 20z" fill="#9fd0e6" /><path d="M8 1l16 3-1 3L7 4z" fill="#e8ecef" /><path d="M24 4l2 18-8 3z" fill="#d6d9da" /><path d="M7 8l13 3M6 12l13 3M5 16l12 3" stroke="#5a9dbd" /></Svg> },
  { name: "Snipping Tool", icon: <Svg w={30} h={28}><ellipse cx="13" cy="9" rx="12" ry="8" fill="#fff" stroke="#d44343" strokeWidth="2" transform="rotate(-18 13 9)" /><path d="M4 14l14-9M12 7l7 10" stroke="#aaa" strokeWidth="2" /><path d="M15 14q-7 10-1 13 5-1 2-11 10 0 11 7-4 4-9-6" stroke="#2277b9" strokeWidth="2" /></Svg> },
  { name: "Chrome", open: true, icon: <Svg w={32} h={32}><circle cx="15" cy="15" r="14" fill="#fbc116" /><path d="M15 15L3 8a14 14 0 0 1 24 0z" fill="#e5453a" /><path d="M15 15l-1 14A14 14 0 0 1 3 8z" fill="#32a350" /><circle cx="15" cy="15" r="6" fill="#3b7ee4" stroke="#fff" strokeWidth="2" /><circle cx="22" cy="22" r="9.500" fill="#2b86ad" /><text x="19" y="26" fill="#fff" fontSize="10" fontFamily="Open Sans">P</text></Svg> },
  { name: "Excel", open: true, on: true, icon: <Svg w={28} h={26}><path d="M13 4h14v18H13z" fill="#fff" stroke="#1f7244" /><path d="M16 8h9M16 12h9M16 16h9M16 20h9" stroke="#2d8a55" strokeWidth="2" /><path d="M0 3l16-3v26L0 23z" fill="#1b6b3e" /><path d="M5 8l6 10M11 8L5 18" stroke="#fff" strokeWidth="2" /></Svg> },
];

export default function App() {
  return (
    <Shell>
      <Global />
      <Header>
        <Clouds width="640" height="71" viewBox="0 0 640 71" fill="#1e663f" aria-hidden="true">
          <path d="M500 41q-10-20 8-28 20 0 28-13h48q10 20-6 41z" fill="#267a4c" />
          <path d="M40 47Q40 2 64 1q20 0 20 18 38-10 41 10-4 22-40 18-30-8-45 0zM148 62q-4-12 8-16-14-28 10-28 15-2 32 4Q215-6 245 5q20 15 10 40l3 15q-40-15-110 2zM285 0h188q0 12-8 25l-28 18 48-6q-4 16-60 16-20-4-40-8-60 0-100 10 6-20 2-40zM560 41q2-8 15-9 12 0 12 9z" />
        </Clouds>
        <TitleBar>
          <QuickAccess>
            <QuickButton aria-label="Save"><SaveIcon /></QuickButton>
            <QuickSplit $ml={11}>
              <QuickButton aria-label="Undo"><UndoIcon /></QuickButton>
              <QuickButton aria-label="Undo history"><Caret c="#fff" /></QuickButton>
            </QuickSplit>
            <QuickSplit>
              <QuickButton disabled aria-label="Redo"><RedoIcon /></QuickButton>
              <QuickButton disabled aria-label="Redo history"><Caret c="#fff" /></QuickButton>
            </QuickSplit>
            <QuickSplit>
              <QuickButton aria-label="Save as"><SaveEditIcon /></QuickButton>
              <QuickButton aria-label="Save options"><Caret c="#fff" /></QuickButton>
            </QuickSplit>
            <QuickButton aria-label="Customize toolbar"><Svg w={7} h={8}><path d="M1 .5h5" stroke="#fff" /><path d="M0 4h7L3.500 8z" fill="#fff" /></Svg></QuickButton>
          </QuickAccess>
          <span>project 1.xlsm - Excel (Product Activation Failed)</span>
          <WindowButtons>
            <button aria-label="Ribbon display"><Svg w={16} h={13}><path d="M.5.5h15v12H.5zM.5 3h15M8 11V5M5.500 7.500L8 5l2.500 2.500" stroke="#fff" /></Svg></button>
            <button aria-label="Minimize"><Svg w={12} h={2}><path d="M0 1h12" stroke="#fff" /></Svg></button>
            <button aria-label="Restore"><Svg w={13} h={13}><path d="M.5 3h9v9.500h-9zM3 3V.5h9.500V10h-3" stroke="#fff" /></Svg></button>
            <button aria-label="Close"><Svg w={13} h={13}><path d="M.5.5l12 12M12.500.5l-12 12" stroke="#fff" /></Svg></button>
          </WindowButtons>
        </TitleBar>
        <TabRow>
          <Tab $file>File</Tab>
          <Tab $active>Home</Tab>
          {["Insert", "Page Layout", "Formulas", "Data", "Review", "View", "Developer", "Infor Q&A", "Power Pivot"].map((t) => <Tab key={t}>{t}</Tab>)}
          <TellMe>
            <Svg w={13} h={19}><path d="M4 13Q1 10 1 6.500a5.500 5.500 0 0 1 11 0Q12 10 9 13v2H4z" stroke="#fff" strokeWidth="1.300" /><path d="M4 16h5v2H4z" fill="#fff" /></Svg>
            <input aria-label="Tell me" placeholder="Tell me what you want to do..." />
          </TellMe>
          <Account>
            <span>Peter Reda</span>
            <Share><Svg w={19} h={21}><circle cx="9" cy="6" r="5" stroke="#fff" strokeWidth="1.500" /><path d="M1 20q0-7 6-9M9 11l3 3M15 11v8M11 15h8" stroke="#fff" strokeWidth="1.500" /></Svg>Share</Share>
          </Account>
        </TabRow>
      </Header>

      <Ribbon aria-label="Ribbon">
        <GroupBox w={188} label="Clipboard" launch pad={1}>
          <Big w={56} icon={<PasteIcon />} l1="Paste" />
          <Stack>
            <SmallButton><IconSlot><CutIcon /></IconSlot>Cut</SmallButton>
            <SmallButton><IconSlot><CopyIcon /></IconSlot>Copy <IconSlot><Caret /></IconSlot></SmallButton>
            <SmallButton><IconSlot><BrushIcon /></IconSlot>Format Painter</SmallButton>
          </Stack>
        </GroupBox>
        <GroupBox w={235} label="Font" launch>
          <Column>
            <ToolRow $pad={4}>
              <Dropdown w={113} value="Calibri" label="Font" /><Dropdown w={61} value="11" label="Font size" joined />
              <Tool $w={28} aria-label="Increase font size">A<Svg w={5} h={16}><path d="M0 4h5L2.500 1z" fill="#2f78b7" /></Svg></Tool>
              <Tool $w={25} $fs={15} aria-label="Decrease font size">A<Svg w={5} h={16}><path d="M0 1h5L2.500 4z" fill="#2f78b7" /></Svg></Tool>
            </ToolRow>
            <ToolRow $pad={1}>
              <Tool $w={28} $weight={700} $fs={16}>B</Tool><Tool $w={28} $weight={700} $italic>I</Tool><Tool $w={24} $weight={600} $line $fs={16}>U</Tool><CaretTool label="Underline style" />
              <Sep /><Tool $w={25} aria-label="Borders"><BorderIcon /></Tool><CaretTool label="Border style" />
              <Sep /><Tool $w={25} aria-label="Fill color"><BucketIcon /></Tool><CaretTool label="Fill colors" />
              <Tool $w={25} aria-label="Font color"><FontColor>A</FontColor></Tool><CaretTool label="Font colors" />
            </ToolRow>
          </Column>
        </GroupBox>
        <GroupBox w={344} label="Alignment" launch pad={4}>
          <Column $w={177}>
            <ToolRow>
              <Tool aria-label="Top align"><Lines rows={[[0, 18, 0], [3, 15, 4], [0, 18, 7]]} /></Tool>
              <Tool aria-label="Middle align"><Lines rows={[[0, 18, 3], [3, 15, 7], [0, 18, 11], [3, 15, 14]]} /></Tool>
              <Tool $on aria-label="Bottom align"><Lines rows={[[0, 18, 7], [3, 15, 11], [0, 18, 14], [3, 15, 17]]} /></Tool>
              <Tool $ml={8} aria-label="Orientation"><OrientIcon /></Tool><CaretTool w={8} label="Orientations" />
              <Sep $m={7} /><Tool $w={20} aria-label="Text direction"><ParaIcon /></Tool><CaretTool w={20} label="Directions" />
            </ToolRow>
            <ToolRow>
              <Tool aria-label="Align left"><Lines w={15} rows={[[0, 15, 4], [0, 10, 8], [0, 15, 11], [0, 10, 14]]} /></Tool>
              <Tool aria-label="Center"><Lines w={15} rows={[[0, 15, 4], [3, 12, 8], [0, 15, 11], [3, 12, 14]]} /></Tool>
              <Tool aria-label="Align right"><Lines w={15} rows={[[0, 15, 4], [5, 15, 8], [0, 15, 11], [5, 15, 14]]} /></Tool>
              <Sep /><Tool aria-label="Indent"><IndentIcon /></Tool><Tool aria-label="Outdent"><IndentIcon out /></Tool>
            </ToolRow>
          </Column>
          <TallSep />
          <Column>
            <ToolRow $pad={7}><SmallButton $gap={3}><WrapIcon />Wrap Text</SmallButton></ToolRow>
            <ToolRow $pad={7}><SmallButton $gap={3}><MergeIcon />Merge &amp; Center<IconSlot $w={20}><Caret /></IconSlot></SmallButton></ToolRow>
          </Column>
        </GroupBox>
        <GroupBox w={161} label="Number" launch>
          <Column>
            <ToolRow $pad={4}><Dropdown w={152} value="General" label="Number format" /></ToolRow>
            <ToolRow>
              <Tool $w={30} $fs={18}>$</Tool><CaretTool w={10} label="Currencies" /><Tool $w={30}>%</Tool><Tool $w={22} aria-label="Comma style"><Svg w={6} h={10}><path d="M3 0a3 3 0 0 1 3 3q0 5-5 7 2-3 1.500-4.500A3 3 0 0 1 3 0" fill="#555" /></Svg></Tool>
              <Sep $m={6} /><Tool $w={22} aria-label="Increase decimal"><DecimalIcon /></Tool><Tool $w={30} aria-label="Decrease decimal"><DecimalIcon dec /></Tool>
            </ToolRow>
          </Column>
        </GroupBox>
        <GroupBox w={453} label="Styles" pad={3}>
          <Big w={88} icon={<CondIcon />} l1="Conditional" l2="Formatting" />
          <Big w={70} icon={<FmtTableIcon />} l1="Format as" l2="Table" />
          <Gallery>
            <StyleGrid>
              <StyleCell>Normal 4</StyleCell><StyleCell $title>Title 2</StyleCell>
              <StyleCell $picked>Normal</StyleCell><StyleCell $bad>Bad</StyleCell>
            </StyleGrid>
            <GalleryScroll>
              <button aria-label="Previous styles"><Svg w={5} h={4}><path d="M0 4h5L2.500 0z" fill="#666" /></Svg></button>
              <button aria-label="Next styles"><Svg w={5} h={4}><path d="M0 0h5L2.500 4z" fill="#666" /></Svg></button>
              <button aria-label="All styles"><Svg w={7} h={8}><path d="M0 .5h7" stroke="#666" /><path d="M0 3h7L3.500 7z" fill="#666" /></Svg></button>
            </GalleryScroll>
          </Gallery>
        </GroupBox>
        <GroupBox w={161} label="Cells" pad={4}>
          <Big w={50} icon={<InsertIcon />} l1="Insert" />
          <Big w={50} icon={<DeleteIcon />} l1="Delete" />
          <Big w={50} icon={<FormatIcon />} l1="Format" />
        </GroupBox>
        <GroupBox w={222} label="Editing" pad={8}>
          <Stack $w={101}>
            <SmallButton $h={27}><IconSlot><SigmaIcon /></IconSlot>AutoSum <IconSlot><Caret /></IconSlot></SmallButton>
            <SmallButton $h={27}><IconSlot><FillIcon /></IconSlot>Fill <Caret /></SmallButton>
            <SmallButton $h={27}><IconSlot><ClearIcon /></IconSlot>Clear <Caret /></SmallButton>
          </Stack>
          <Big w={54} icon={<SortIcon />} l1="Sort &" l2="Filter" />
          <Big w={54} icon={<FindIcon />} l1="Find &" l2="Select" />
        </GroupBox>
        <RibbonEnd><button aria-label="Collapse ribbon"><Chevron /></button></RibbonEnd>
      </Ribbon>

      <FormulaBar>
        <NameBox><input aria-label="Name box" defaultValue="J4" /><button aria-label="Names"><Caret /></button></NameBox>
        <Dots $w={37}><i /><i /><i /></Dots>
        <FormulaTools>
          <button aria-label="Cancel"><Svg w={16} h={14}><path d="M1 1l14 12M15 1L1 13" stroke="#c0c0c0" strokeWidth="2" /></Svg></button>
          <button aria-label="Enter"><Svg w={17} h={14}><path d="M1 8l5 4L16 1" stroke="#c0c0c0" strokeWidth="3" /></Svg></button>
          <button aria-label="Insert function">fx</button>
        </FormulaTools>
        <FormulaInput><textarea aria-label="Formula" /><button aria-label="Collapse formula bar"><Up /></button></FormulaInput>
      </FormulaBar>

      <Sheet>
        <VScroll>
          <ScrollButton aria-label="Scroll up"><Up /></ScrollButton>
          <VTrack />
          <ScrollButton aria-label="Scroll down"><Down /></ScrollButton>
        </VScroll>
        <Table>
          <colgroup>{widths.map((w, i) => <col key={i} style={{ width: w }} />)}</colgroup>
          <thead>
            <tr>
              {letters.map((l) => <ColHead key={l} scope="col" $on={l === "J"}>{l}</ColHead>)}
              <Corner aria-label="Select all"><Svg w={7} h={7}><path d="M0 0v7h7z" fill="#b8bcba" /></Svg></Corner>
            </tr>
          </thead>
          <tbody>{rows.map((r, i) => <SheetRow key={i} row={r} />)}</tbody>
        </Table>
        <PdfButton dir="rtl">حفظ كملف PDF</PdfButton>
        <Panel>
          <HomeButton dir="rtl">الرجوع للقائمة الرئيسية</HomeButton>
          <PanelCols>
            <PanelCol $gap={6} $top={2} dir="rtl">
              {panelLeft.map((t, i) => <PanelButton key={i} $tall={t.length > 1} $on={i === 2} $small={i === 0 || i > 2}>{t[0]}{t[1] && <><br />{t[1]}</>}</PanelButton>)}
            </PanelCol>
            <PanelCol>{panelMid.map((t, i) => <PanelButton key={t} $small={i === 3}>{t}</PanelButton>)}</PanelCol>
            <PanelCol>{panelRight.map((t) => <PanelButton key={t}>{t}</PanelButton>)}</PanelCol>
          </PanelCols>
        </Panel>
      </Sheet>

      <SheetBar>
        <HScroll>
          <ScrollButton aria-label="Scroll left"><Left /></ScrollButton><HThumb /><ScrollButton aria-label="Scroll right"><Right /></ScrollButton>
        </HScroll>
        <Dots $w={32}><i /><i /><i /></Dots>
        <More $w={26} aria-label="New sheet"><Svg w={20} h={20}><circle cx="10" cy="10" r="9" stroke="#777" strokeWidth="1.300" /><path d="M10 5v10M5 10h10" stroke="#777" strokeWidth="1.800" /></Svg></More>
        <More $w={37}>...</More>
        <SheetTab $active>ProfitorLoss</SheetTab>
        <SheetTab $l={16} $r={14}>CapitalMoney</SheetTab><TabSep />
        <SheetTab $l={22} $r={19}>estimateandactualcostofproject</SheetTab><TabSep />
        <SheetTab $l={22} $r={18}>Costofcreateandoperateproject</SheetTab><TabSep />
        <SheetTab $l={14} $r={11}>Cash</SheetTab><TabSep />
        <SheetTab $l={14} $r={11}>Checks</SheetTab><TabSep />
        <SheetTab $l={16} $r={13}>ExpensesandIncome</SheetTab><TabSep />
        <More $w={28}>...</More>
        <More $w={28} aria-label="Previous sheet"><Left c="#0e5c2f" /></More>
        <More $w={28} aria-label="Next sheet"><Right c="#0e5c2f" /></More>
      </SheetBar>

      <StatusBar>
        <StatusText>Ready</StatusText><StatusText>Num Lock</StatusText>
        <Svg w={16} h={15}><path d="M1.500 3.500h13v11h-13z" stroke="#777" /><path d="M6 1h9v3H6z" fill="#777" /><circle cx="3.500" cy="3.500" r="3.500" fill="#777" /><path d="M4 8.500h9M4 11.500h9" stroke="#777" strokeDasharray="2 1" /></Svg>
        <Spacer />
        <ViewButton $on aria-label="Normal view"><Svg w={13} h={13}><path d="M.5.5h12v12H.5zM.5 4.500h12M.5 8.500h12M4.500.5v12M8.500.5v12" stroke="#666" /></Svg></ViewButton>
        <ViewButton aria-label="Page layout view"><Svg w={13} h={13}><path d="M.5.5h12v12H.5zM3.500 2.500h6v8h-6zM5 5h3M5 7h3M5 9h3" stroke="#666" /></Svg></ViewButton>
        <ViewButton aria-label="Page break view"><Svg w={13} h={13}><path d="M.5.5h12v12H.5zM4.500.5v7h4v-7M8.500 7.500h4" stroke="#666" /></Svg></ViewButton>
        <ZoomButton aria-label="Zoom out"><Svg w={10} h={2}><path d="M0 1h10" stroke="#555" strokeWidth="2" /></Svg></ZoomButton>
        <Slider type="range" aria-label="Zoom" min="0" max="100" defaultValue="28" />
        <ZoomButton aria-label="Zoom in"><Svg w={12} h={12}><path d="M0 6h12M6 0v12" stroke="#555" strokeWidth="2" /></Svg></ZoomButton>
        <Percent>60%</Percent>
      </StatusBar>

      <Taskbar>
        <Start aria-label="Start"><Svg w={20} h={20}><path d="M0 3l8.500-1.200v7.700H0zM9.500 1.600L20 0v9.500H9.500zM0 10.500h8.500v7.700L0 17zM9.500 10.500H20V20L9.500 18.400z" fill="#fff" /></Svg></Start>
        <Search>
          <Svg w={20} h={20}><circle cx="12.500" cy="7.500" r="6.500" stroke="#222" strokeWidth="1.500" /><path d="M8 12.500L1 19.500" stroke="#222" strokeWidth="1.500" /></Svg>
          <input aria-label="Search" placeholder="Type here to search" />
          <Promo><Svg w={12} h={12}><circle cx="6" cy="6" r="5" stroke="#dcc08a" strokeWidth="2" strokeDasharray="1 1" /><circle cx="6" cy="6" r="2" stroke="#bbb" /></Svg><span>ORASCOM<br />DEVELOPMENT</span></Promo>
        </Search>
        {apps.map((a) => <AppButton key={a.name} aria-label={a.name} $open={a.open} $on={a.on}>{a.icon}</AppButton>)}
        <Tray>
          <TrayItem $w={126} $fs={17}>
            <Svg w={31} h={30}><path d="M20 1q13 14 1 25-9 6-18-1 18-1 17-24" fill="#f4a62a" /><path d="M4 13q-4-1-4-5 1-4 5-3 2-5 7-4 4 2 4 5 3 1 2 5-1 2-4 2zM16 27q-4-1-3-4 1-4 5-3 2-4 6-3 4 2 3 5 3 0 3 3 0 2-3 2z" fill="#b5cdf2" /></Svg>23°C
          </TrayItem>
          <TrayItem aria-label="Hidden icons"><Chevron c="#fff" w={16} /></TrayItem>
          <TrayItem aria-label="Battery"><Svg w={19} h={12}><path d="M.7.7h16v10.600H.7zM18 4v4" stroke="#fff" strokeWidth="1.400" /><path d="M3 3h5v6H3z" fill="#fff" /></Svg></TrayItem>
          <TrayItem aria-label="Wi-Fi"><Svg w={16} h={16}><path d="M1 14Q2 2 15 1M5 15q1-8 10-10M9 15q0-4 6-6" stroke="#ddd" strokeWidth="1.400" /><circle cx="13.500" cy="13.500" r="1.800" fill="#fff" /></Svg></TrayItem>
          <TrayItem $w={28} aria-label="Volume"><Svg w={21} h={16}><path d="M1 5.500h3l4-4v13l-4-4H1zM11 6q2 2 0 5M14 3.500q4 4 0 9M17 1q6 7 0 14" stroke="#fff" strokeWidth="1.300" /></Svg></TrayItem>
          <TrayItem $w={46}>ع</TrayItem>
          <TrayItem $w={86}>4:26 AM<br />30-Oct-23</TrayItem>
          <TrayItem $w={60} aria-label="24 notifications"><Svg w={34} h={32}><path d="M2 1h20v18h-6l-5 5v-5H2z" fill="#fff" /><path d="M6 6h12M6 10h12M6 14h8" stroke="#3a4344" strokeWidth="1.500" /><circle cx="22" cy="22" r="11" fill="#4a5152" stroke="#aaa" /><text x="14" y="27" fill="#fff" fontSize="13" fontWeight="700" fontFamily="Open Sans">24</text></Svg></TrayItem>
          <Show aria-label="Show desktop" />
        </Tray>
      </Taskbar>
      <Watermark aria-hidden="true"><WatermarkArabic>مستقل</WatermarkArabic>mostaql.com</Watermark>
    </Shell>
  );
}
